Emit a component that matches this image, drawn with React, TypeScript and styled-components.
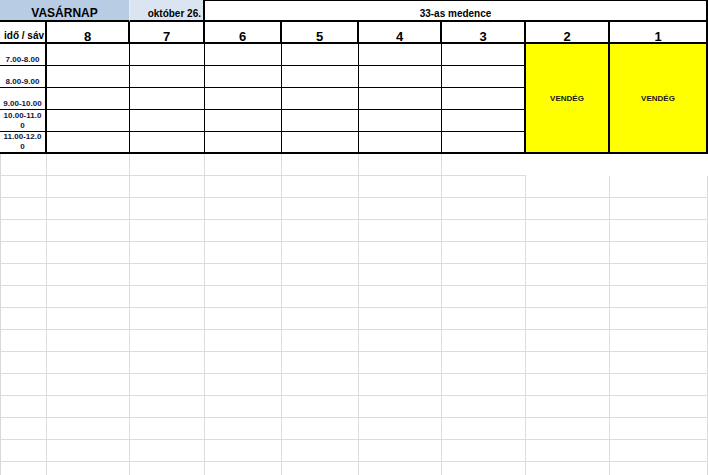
import React from "react";
import styled, { createGlobalStyle } from "styled-components";

const GlobalStyle = createGlobalStyle`
  html, body {
    margin: 0;
    padding: 0;
    background: #ffffff;
    overflow: hidden;
  }
  body {
    font-family: "Liberation Sans", Arial, sans-serif;
    color: #000000;
  }
`;

const columnWidths = [47, 83, 75, 77, 77, 83, 84, 84, 98];
const lanes = ["8", "7", "6", "5", "4", "3", "2", "1"];
const times = ["7.00-8.00", "8.00-9.00", "9.00-10.00", "10.00-11.00", "11.00-12.00"];
const EMPTY_ROWS = 15;

const Page = styled.div`
  width: 708px;
  height: 475px;
  overflow: hidden;
`;

const Sheet = styled.div`
  display: grid;
  grid-template-columns: ${columnWidths.map((w) => `${w}px`).join(" ")};
  grid-auto-rows: 22px;
`;

const BaseCell = styled.div`
  box-sizing: border-box;
  min-width: 0;
  overflow: hidden;
  font-weight: bold;
  display: flex;
`;

const DayCell = styled(BaseCell)`
  grid-column: span 2;
  background: #b8cce4;
  border-right: 1px solid #e4ecf6;
  border-bottom: 2px solid #000;
  justify-content: center;
  align-items: flex-end;
  font-size: 12px;
  line-height: 14px;
`;

const DateCell = styled(BaseCell)`
  background: #dbe5f1;
  border-right: 2px solid #000;
  border-bottom: 2px solid #000;
  justify-content: flex-end;
  align-items: flex-end;
  padding-right: 2px;
  font-size: 10px;
  line-height: 12px;
`;

const PoolCell = styled(BaseCell)`
  grid-column: span 6;
  border-top: 1px solid #000;
  border-right: 2px solid #000;
  border-bottom: 2px solid #000;
  justify-content: center;
  align-items: flex-end;
  font-size: 10px;
  line-height: 12px;
`;

const CornerHead = styled(BaseCell)`
  border-right: 2px solid #000;
  border-bottom: 2px solid #000;
  align-items: flex-end;
  padding-left: 4px;
  font-size: 10px;
  line-height: 12px;
`;

const LaneHead = styled(BaseCell)`
  border-right: 2px solid #000;
  border-bottom: 2px solid #000;
  justify-content: center;
  align-items: flex-end;
  font-size: 13px;
  line-height: 11px;
`;

const TimeCell = styled(BaseCell)<{ $last: boolean }>`
  flex-direction: column;
  justify-content: flex-end;
  border-right: 2px solid #000;
  border-bottom: ${(p) => (p.$last ? 2 : 1)}px solid #000;
  padding: 0 2px;
  text-align: center;
  word-break: break-all;
  font-size: 8px;
  line-height: 10px;
  color: #10143a;
`;

const SlotCell = styled(BaseCell)<{ $last: boolean; $edge: boolean }>`
  border-right: ${(p) => (p.$edge ? 2 : 1)}px solid #000;
  border-bottom: ${(p) => (p.$last ? 2 : 1)}px solid #000;
`;

const GuestCell = styled(BaseCell)`
  grid-row: span 5;
  background: #ffff00;
  border-right: 2px solid #000;
  border-bottom: 2px solid #000;
  justify-content: center;
  align-items: center;
  font-size: 8px;
  color: #1a1a1a;
`;

const GridCell = styled.div<{ $first: boolean; $open: boolean }>`
  box-sizing: border-box;
  border-left: ${(p) => (p.$first ? "1px solid #d9d9d9" : "none")};
  border-right: ${(p) => (p.$open ? "none" : "1px solid #dcdcdc")};
  border-bottom: 1px solid #dcdcdc;
`;

const MergedBlank = styled.div`
  grid-column: span 2;
`;

const App: React.FC = () => {
  const emptyRows = Array.from({ length: EMPTY_ROWS }, (_, r) => r);

  return (
    <Page>
      <GlobalStyle />
      <Sheet>
        <DayCell>VASÁRNAP</DayCell>
        <DateCell>október 26.</DateCell>
        <PoolCell>33-as medence</PoolCell>

        <CornerHead>idő / sáv</CornerHead>
        {lanes.map((l) => (
          <LaneHead key={l}>{l}</LaneHead>
        ))}

        {times.map((t, i) => {
          const last = i === times.length - 1;
          return (
            <React.Fragment key={t}>
              <TimeCell $last={last}>
                <span>{t}</span>
              </TimeCell>
              {lanes.slice(0, 6).map((l, j) => (
                <SlotCell key={l} $last={last} $edge={j === 5} />
              ))}
              {i === 0 && (
                <>
                  <GuestCell>VENDÉG</GuestCell>
                  <GuestCell>VENDÉG</GuestCell>
                </>
              )}
            </React.Fragment>
          );
        })}

        {emptyRows.map((r) =>
          r === 0 ? (
            <React.Fragment key={r}>
              {columnWidths.slice(0, 7).map((_, c) => (
                <GridCell key={c} $first={c === 0} $open={c === 6} />
              ))}
              <MergedBlank />
            </React.Fragment>
          ) : (
            <React.Fragment key={r}>
              {columnWidths.map((_, c) => (
                <GridCell key={c} $first={c === 0} $open={false} />
              ))}
            </React.Fragment>
          )
        )}
      </Sheet>
    </Page>
  );
};

export default App;
